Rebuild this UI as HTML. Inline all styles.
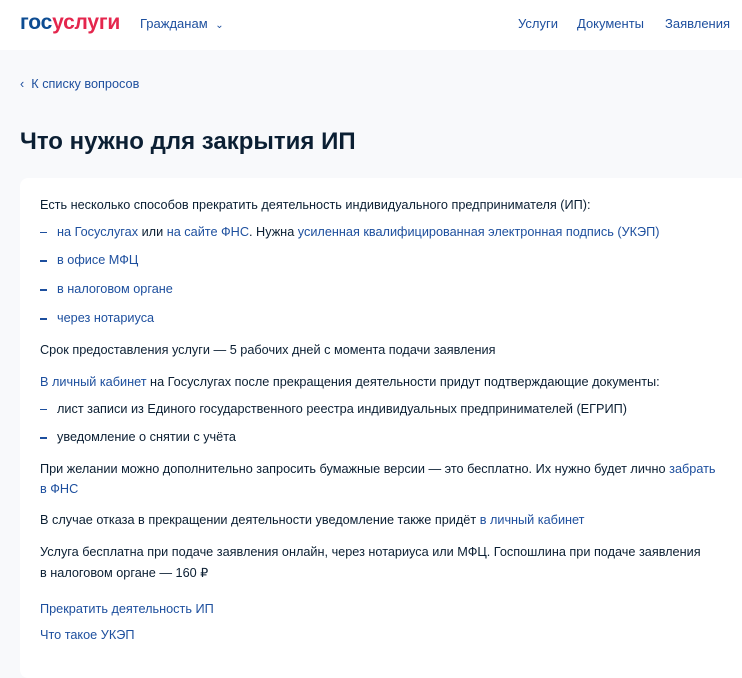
<!DOCTYPE html>
<html><head><meta charset="utf-8"><style>
*{margin:0;padding:0;box-sizing:border-box}
body{width:742px;height:658px;overflow:hidden;background:#f8f9fb;font-family:"Liberation Sans",sans-serif;color:#0b1f33;position:relative}
.hdr{position:absolute;left:0;top:0;width:742px;height:50px;background:#fff}
.abs{position:absolute;white-space:nowrap}
a{color:#1d4f9e;text-decoration:none}
.t{font-size:12.7px;position:absolute;left:40px;white-space:nowrap}
.d{position:absolute;left:40px;width:7px;height:2px;background:#1d4f9e}
.card{position:absolute;left:20px;top:178px;width:730px;height:500px;background:#fff;border-radius:8px}
</style></head><body>
<div class="hdr">
<div class="abs" style="left:20px;top:11px;font-size:21px;font-weight:bold;letter-spacing:-0.2px"><span style="color:#0d4c92">гос</span><span style="color:#e4264d">услуги</span></div>
<div class="abs" style="left:140px;top:16px;font-size:13px;color:#1d4f9e">Гражданам <span style="font-size:10px;margin-left:4px">&#8964;</span></div>
<div class="abs" style="left:518px;top:16px;font-size:13px;color:#1d4f9e">Услуги</div>
<div class="abs" style="left:577px;top:16px;font-size:13px;color:#1d4f9e">Документы</div>
<div class="abs" style="left:665px;top:16px;font-size:13px;color:#1d4f9e">Заявления</div>
</div>
<div class="abs" style="left:20px;top:77px;font-size:12.7px;color:#1d4f9e">‹&nbsp; К списку вопросов</div>
<div class="abs" style="left:20px;top:128px;font-size:24px;font-weight:bold">Что нужно для закрытия ИП</div>
<div class="card"></div>
<div class="t" style="top:198px">Есть несколько способов прекратить деятельность индивидуального предпринимателя (ИП):</div>
<div class="d" style="top:232px;height:1px"></div>
<div class="t" style="top:225px;left:57px"><a>на Госуслугах</a> или <a>на сайте ФНС</a>. Нужна <a>усиленная квалифицированная электронная подпись (УКЭП)</a></div>
<div class="d" style="top:260px"></div><div class="t" style="top:253px;left:57px"><a>в офисе МФЦ</a></div>
<div class="d" style="top:289px"></div><div class="t" style="top:282px;left:57px"><a>в налоговом органе</a></div>
<div class="d" style="top:318px"></div><div class="t" style="top:311px;left:57px"><a>через нотариуса</a></div>
<div class="t" style="top:343px">Срок предоставления услуги — 5 рабочих дней с момента подачи заявления</div>
<div class="t" style="top:375px"><a>В личный кабинет</a> на Госуслугах после прекращения деятельности придут подтверждающие документы:</div>
<div class="d" style="top:409px;height:1px"></div><div class="t" style="top:402px;left:57px">лист записи из Единого государственного реестра индивидуальных предпринимателей (ЕГРИП)</div>
<div class="d" style="top:437px"></div><div class="t" style="top:430px;left:57px">уведомление о снятии с учёта</div>
<div class="t" style="top:462px">При желании можно дополнительно запросить бумажные версии — это бесплатно. Их нужно будет лично <a>забрать</a></div>
<div class="t" style="top:482px"><a>в ФНС</a></div>
<div class="t" style="top:513px">В случае отказа в прекращении деятельности уведомление также придёт <a>в личный кабинет</a></div>
<div class="t" style="top:545px">Услуга бесплатна при подаче заявления онлайн, через нотариуса или МФЦ. Госпошлина при подаче заявления</div>
<div class="t" style="top:565px">в налоговом органе — 160 ₽</div>
<div class="t" style="top:602px"><a>Прекратить деятельность ИП</a></div>
<div class="t" style="top:628px"><a>Что такое УКЭП</a></div>
</body></html>
